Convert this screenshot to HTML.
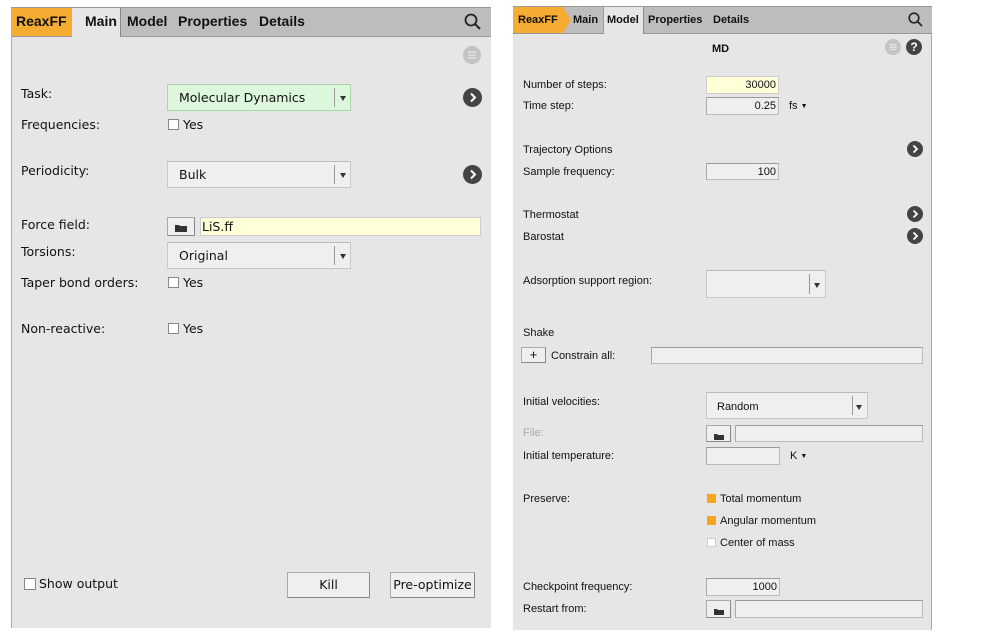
<!DOCTYPE html>
<html><head><meta charset="utf-8">
<style>
*{margin:0;padding:0;box-sizing:border-box}
body{width:997px;height:641px;background:#fff;position:relative;overflow:hidden;font-family:"DejaVu Sans","Liberation Sans",sans-serif;color:#111}
.a{position:absolute}
#L{left:11px;top:7px;width:480px;height:621px;background:#e6e6e6;border-left:1px solid #aaa}
#R{left:513px;top:6px;width:419px;height:624px;background:#e6e6e6;border-right:1px solid #aaa}
.L{font-size:12.5px;line-height:16px;white-space:nowrap}
.T{font-family:"Liberation Sans",sans-serif;font-size:14px;font-weight:bold;line-height:16px;white-space:nowrap}
.R{font-family:"Liberation Sans",sans-serif;font-size:11px;line-height:14px;white-space:nowrap}
.tb{background:#bdbdbd;border-top:1px solid #999;border-bottom:1px solid #999}
.inp{background:#efefef;border:1px solid #bbb;border-top-color:#999;border-left-color:#aaa}
.combo{background:#efefef;border:1px solid #c8c8c8;border-top-color:#bbb}
.sep{position:absolute;top:3px;bottom:3px;width:1px;background:#999}
.dd{position:absolute;width:0;height:0;border-left:3px solid transparent;border-right:3px solid transparent;border-top:5px solid #333}
.circ{position:absolute;border-radius:50%;background:#444;color:#fff;text-align:center;font-weight:bold}
.cb{position:absolute;width:11px;height:11px;background:#fff;border:1px solid #888}
.btn{position:absolute;background:#efefef;border:1px solid #aaa;border-bottom-color:#888;border-right-color:#888;text-align:center}
.sm{font-size:7px;vertical-align:1px}
</style></head><body>

<div id="L" class="a"></div>
<div class="a tb" style="left:11px;top:7px;width:480px;height:30px"></div>
<svg class="a" style="left:11px;top:8px" width="72" height="28"><polygon points="0,0 62,0 70,14 62,28 0,28" fill="#f5ac32"/></svg>
<div class="a" style="left:72px;top:8px;width:49px;height:29px;background:#e6e6e6;border-right:1px solid #888"></div>
<div class="a T" style="left:16px;top:13px">ReaxFF</div>
<div class="a T" style="left:85px;top:13px">Main</div>
<div class="a T" style="left:127px;top:13px">Model</div>
<div class="a T" style="left:178px;top:13px">Properties</div>
<div class="a T" style="left:259px;top:13px">Details</div>
<svg class="a" style="left:464px;top:13px" width="18" height="18"><circle cx="7" cy="7" r="5.5" fill="none" stroke="#222" stroke-width="1.8"/><line x1="11" y1="11" x2="16" y2="16" stroke="#222" stroke-width="2"/></svg>
<svg class="a" style="left:463px;top:46px" width="18" height="18"><circle cx="9" cy="9" r="9" fill="#c4c4c4"/><path d="M5 6h8M5 9h8M5 12h8" stroke="#e6e6e6" stroke-width="1.3"/></svg>

<div class="a L" style="left:21px;top:86px">Task:</div>
<div class="a" style="left:167px;top:84px;width:184px;height:27px;background:#ddf7dd;border:1px solid #a8d8a8"><div class="a L" style="left:11px;top:5px">Molecular Dynamics</div><div class="sep" style="left:166px"></div><div class="dd" style="left:172px;top:11px"></div></div>
<svg class="a" style="left:463px;top:88px" width="19" height="19"><circle cx="9.5" cy="9.5" r="9.5" fill="#444"/><path d="M8 5.5l4 4-4 4" fill="none" stroke="#fff" stroke-width="2"/></svg>

<div class="a L" style="left:21px;top:117px">Frequencies:</div>
<div class="cb" style="left:168px;top:119px"></div><div class="a L" style="left:183px;top:117px">Yes</div>

<div class="a L" style="left:21px;top:163px">Periodicity:</div>
<div class="a combo" style="left:167px;top:161px;width:184px;height:27px"><div class="a L" style="left:11px;top:5px">Bulk</div><div class="sep" style="left:166px"></div><div class="dd" style="left:172px;top:11px"></div></div>
<svg class="a" style="left:463px;top:165px" width="19" height="19"><circle cx="9.5" cy="9.5" r="9.5" fill="#444"/><path d="M8 5.5l4 4-4 4" fill="none" stroke="#fff" stroke-width="2"/></svg>

<div class="a L" style="left:21px;top:217px">Force field:</div>
<div class="btn" style="left:167px;top:217px;width:28px;height:19px"><svg style="margin-top:4px" width="14" height="10"><path d="M1 2h4l1 1h7v6H1z" fill="#333"/></svg></div>
<div class="a" style="left:200px;top:217px;width:281px;height:19px;background:#ffffd8;border:1px solid #ccc"><div class="a L" style="left:1px;top:1px">LiS.ff</div></div>

<div class="a L" style="left:21px;top:244px">Torsions:</div>
<div class="a combo" style="left:167px;top:242px;width:184px;height:27px"><div class="a L" style="left:11px;top:5px">Original</div><div class="sep" style="left:166px"></div><div class="dd" style="left:172px;top:11px"></div></div>

<div class="a L" style="left:21px;top:275px">Taper bond orders:</div>
<div class="cb" style="left:168px;top:277px"></div><div class="a L" style="left:183px;top:275px">Yes</div>
<div class="a L" style="left:21px;top:321px">Non-reactive:</div>
<div class="cb" style="left:168px;top:323px"></div><div class="a L" style="left:183px;top:321px">Yes</div>

<div class="cb" style="left:24px;top:578px;width:12px;height:12px"></div><div class="a L" style="left:39px;top:576px">Show output</div>
<div class="btn L" style="left:287px;top:572px;width:83px;height:26px;line-height:24px">Kill</div>
<div class="btn L" style="left:390px;top:572px;width:85px;height:26px;line-height:24px">Pre-optimize</div>

<div id="R" class="a"></div>
<div class="a tb" style="left:513px;top:6px;width:419px;height:28px"></div>
<svg class="a" style="left:513px;top:7px" width="62" height="26"><polygon points="0,0 50,0 58,13 50,26 0,26" fill="#f5ac32"/></svg>
<div class="a" style="left:603px;top:7px;width:41px;height:27px;background:#e6e6e6;border-left:1px solid #999;border-right:1px solid #888"></div>
<div class="a R" style="left:518px;top:13px;font-weight:bold">ReaxFF</div>
<div class="a R" style="left:573px;top:13px;font-weight:bold">Main</div>
<div class="a R" style="left:607px;top:13px;font-weight:bold">Model</div>
<div class="a R" style="left:648px;top:13px;font-weight:bold">Properties</div>
<div class="a R" style="left:713px;top:13px;font-weight:bold">Details</div>
<svg class="a" style="left:908px;top:12px" width="16" height="16"><circle cx="6" cy="6" r="4.8" fill="none" stroke="#222" stroke-width="1.6"/><line x1="9.5" y1="9.5" x2="14" y2="14" stroke="#222" stroke-width="1.8"/></svg>
<div class="a R" style="left:712px;top:42px;font-weight:bold">MD</div>
<svg class="a" style="left:885px;top:39px" width="16" height="16"><circle cx="8" cy="8" r="8" fill="#c4c4c4"/><path d="M4.5 5.5h7M4.5 8h7M4.5 10.5h7" stroke="#e6e6e6" stroke-width="1.2"/></svg>
<div class="circ R" style="left:906px;top:39px;width:16px;height:16px;line-height:16px;font-size:12px">?</div>

<div class="a R" style="left:523px;top:78px">Number of steps:</div>
<div class="a" style="left:706px;top:76px;width:73px;height:18px;background:#ffffd8;border:1px solid #ccc"><div class="a R" style="right:2px;top:1px">30000</div></div>
<div class="a R" style="left:523px;top:99px">Time step:</div>
<div class="a inp" style="left:706px;top:97px;width:73px;height:18px"><div class="a R" style="right:2px;top:1px">0.25</div></div>
<div class="a R" style="left:789px;top:99px">fs <span class="sm">▼</span></div>

<div class="a R" style="left:523px;top:143px">Trajectory Options</div>
<svg class="a" style="left:907px;top:141px" width="16" height="16"><circle cx="8" cy="8" r="8" fill="#444"/><path d="M6.5 4.5l3.5 3.5-3.5 3.5" fill="none" stroke="#fff" stroke-width="1.8"/></svg>
<div class="a R" style="left:523px;top:165px">Sample frequency:</div>
<div class="a inp" style="left:706px;top:163px;width:73px;height:17px"><div class="a R" style="right:2px;top:1px">100</div></div>

<div class="a R" style="left:523px;top:208px">Thermostat</div>
<svg class="a" style="left:907px;top:206px" width="16" height="16"><circle cx="8" cy="8" r="8" fill="#444"/><path d="M6.5 4.5l3.5 3.5-3.5 3.5" fill="none" stroke="#fff" stroke-width="1.8"/></svg>
<div class="a R" style="left:523px;top:230px">Barostat</div>
<svg class="a" style="left:907px;top:228px" width="16" height="16"><circle cx="8" cy="8" r="8" fill="#444"/><path d="M6.5 4.5l3.5 3.5-3.5 3.5" fill="none" stroke="#fff" stroke-width="1.8"/></svg>

<div class="a R" style="left:523px;top:274px">Adsorption support region:</div>
<div class="a combo" style="left:706px;top:270px;width:120px;height:28px"><div class="sep" style="left:102px"></div><div class="dd" style="left:107px;top:12px"></div></div>

<div class="a R" style="left:523px;top:326px">Shake</div>
<div class="btn R" style="left:521px;top:347px;width:25px;height:16px;line-height:13px;font-size:13px">+</div>
<div class="a R" style="left:551px;top:349px">Constrain all:</div>
<div class="a inp" style="left:651px;top:347px;width:272px;height:17px"></div>

<div class="a R" style="left:523px;top:395px">Initial velocities:</div>
<div class="a combo" style="left:706px;top:392px;width:162px;height:27px"><div class="a R" style="left:10px;top:7px">Random</div><div class="sep" style="left:145px"></div><div class="dd" style="left:149px;top:12px"></div></div>
<div class="a R" style="left:523px;top:426px;color:#aaa">File:</div>
<div class="btn" style="left:706px;top:425px;width:25px;height:17px"><svg style="margin-top:3px" width="12" height="9"><path d="M1 2h3l1 1h6v5H1z" fill="#333"/></svg></div>
<div class="a inp" style="left:735px;top:425px;width:188px;height:17px"></div>
<div class="a R" style="left:523px;top:449px">Initial temperature:</div>
<div class="a inp" style="left:706px;top:447px;width:74px;height:18px"></div>
<div class="a R" style="left:790px;top:449px">K <span class="sm">▼</span></div>

<div class="a R" style="left:523px;top:492px">Preserve:</div>
<div class="a" style="left:707px;top:494px;width:9px;height:9px;background:#f7a51c"></div><div class="a R" style="left:720px;top:492px">Total momentum</div>
<div class="a" style="left:707px;top:516px;width:9px;height:9px;background:#f7a51c"></div><div class="a R" style="left:720px;top:514px">Angular momentum</div>
<div class="a" style="left:707px;top:538px;width:9px;height:9px;background:#fff;border:1px solid #ccc"></div><div class="a R" style="left:720px;top:536px">Center of mass</div>

<div class="a R" style="left:523px;top:580px">Checkpoint frequency:</div>
<div class="a inp" style="left:706px;top:578px;width:74px;height:18px"><div class="a R" style="right:2px;top:1px">1000</div></div>
<div class="a R" style="left:523px;top:602px">Restart from:</div>
<div class="btn" style="left:706px;top:600px;width:25px;height:18px"><svg style="margin-top:4px" width="12" height="9"><path d="M1 2h3l1 1h6v5H1z" fill="#333"/></svg></div>
<div class="a inp" style="left:735px;top:600px;width:188px;height:18px"></div>
</body></html>
